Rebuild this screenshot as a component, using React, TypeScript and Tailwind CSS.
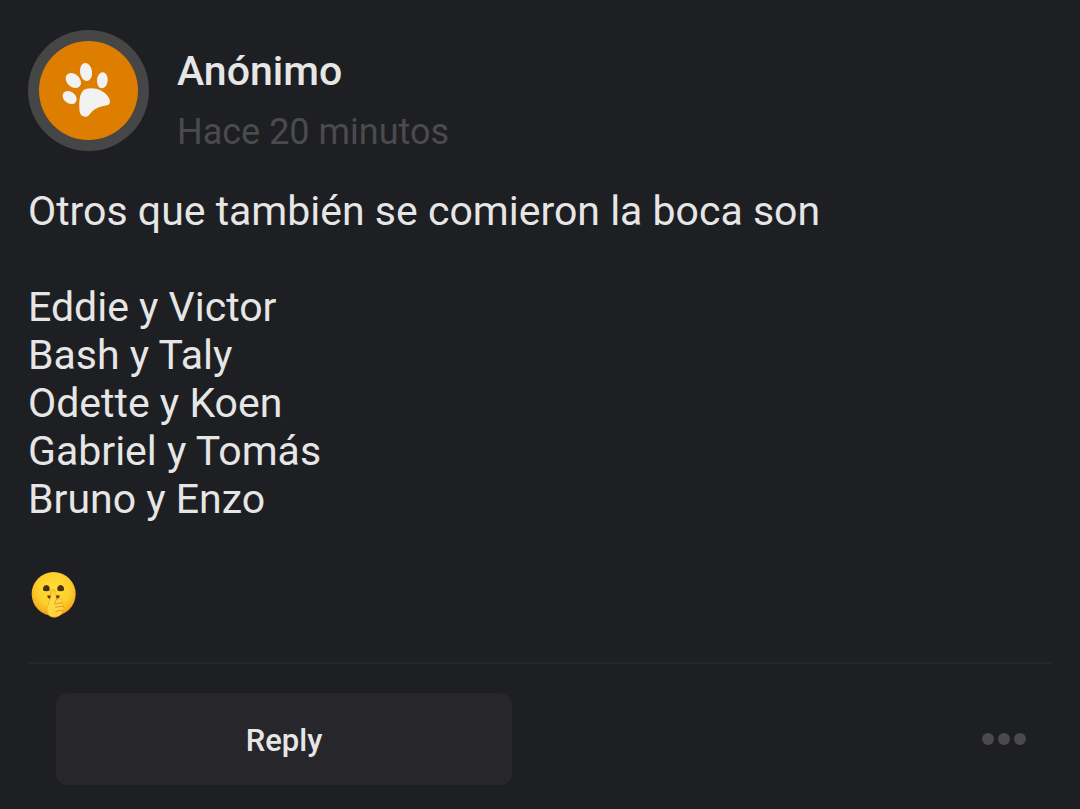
import React from "react";

const couples = [
    "Eddie y Victor",
    "Bash y Taly",
    "Odette y Koen",
    "Gabriel y Tomás",
    "Bruno y Enzo",
];

function PawAvatar() {
    return (
        <svg viewBox="0 0 363 363" className="size-[121px] shrink-0" role="img" aria-label="Avatar">
            <circle cx="181.5" cy="181.5" r="181.5" fill="#464646" />
            <circle cx="181.5" cy="181.5" r="148.5" fill="#de7e00" />
            <g fill="#f2f2f2" transform="translate(-24 -30)">
                <ellipse cx="160" cy="181.500" rx="19" ry="26" transform="rotate(-48 160 181.500)" />
                <ellipse cx="198" cy="156" rx="18" ry="27.500" transform="rotate(-8 198 156)" />
                <ellipse cx="247" cy="181" rx="16" ry="24" transform="rotate(5 247 181)" />
                <ellipse cx="149" cy="232.500" rx="17.500" ry="23" transform="rotate(-52 149 232.500)" />
                <path d="M178 262C177 242 180 221 190 211C198 204 214 203 229 206C247 211 261 222 267 234C271 243 271 251 266 254C261 257 249 257 239 261C222 267 215 276 208 284C203 290 196 292 190 289C181 286 178 277 178 262Z" />
            </g>
        </svg>
    );
}

function ShushingFace() {
    return (
        <svg viewBox="24 36 150 144" className="h-12 w-[50px]" role="img" aria-label="Cara pidiendo silencio">
            <defs>
                <radialGradient id="face" cx="0.5" cy="0.4" r="0.62">
                    <stop offset="0" stopColor="#ffe036" />
                    <stop offset="0.6" stopColor="#fdcf2d" />
                    <stop offset="0.85" stopColor="#f7b31f" />
                    <stop offset="1" stopColor="#ee9318" />
                </radialGradient>
                <linearGradient id="hand" x1="0" y1="0" x2="0.4" y2="1">
                    <stop offset="0" stopColor="#fbb52a" />
                    <stop offset="0.4" stopColor="#ffdc48" />
                    <stop offset="1" stopColor="#fdd23c" />
                </linearGradient>
            </defs>
            <circle cx="101" cy="105" r="66" fill="url(#face)" />
            <path d="M69 94V86Q72 78 79 78Q87 78 89 86V94Q86 97 79 97Q72 97 69 94Z" fill="#4a2f13" />
            <path d="M112 94V86Q114 78 122 78Q129 78 132 86V94Q129 97 122 97Q115 97 112 94Z" fill="#4a2f13" />
            <path d="M81 110Q100 106 120 110Q117 119 108 119H90Q83 118 81 110Z" fill="#603613" />
            <path
                d="M92 99Q93 91 99 91Q105 91 107 99L109 122Q116 117 124 121Q130 125 126 132Q134 136 130 143Q135 149 129 155Q126 169 109 174Q91 177 84 165Q77 149 85 136Q87 124 92 117Z"
                fill="url(#hand)"
                stroke="#f0a51e"
                strokeWidth="2"
            />
            <g fill="none" stroke="#e08a1a" strokeWidth="2.500" strokeLinecap="round">
                <path d="M109 122L104 134Q108 138 112 133L126 132" />
                <path d="M107 145Q118 140 130 143" />
                <path d="M108 157Q119 151 129 155" />
            </g>
        </svg>
    );
}

export default function App() {
    return (
        <main className="min-h-screen bg-[#1e1f22] font-[Roboto,sans-serif] text-[#e6e6e6]">
            <article className="px-7 pt-[30px] pb-6">
                {/* Author */}
                <header className="flex gap-7">
                    <PawAvatar />
                    <div className="pt-4">
                        <h1 className="text-[41px] leading-[50px] font-medium">Anónimo</h1>
                        <p className="mt-3 text-[36px] leading-12 text-[#4b4b4d]">
                            <time>Hace 20 minutos</time>
                        </p>
                    </div>
                </header>

                {/* Message */}
                <div className="mt-[31px] text-[41px] leading-12">
                    <p>Otros que también se comieron la boca son</p>
                    <ul className="mt-12">
                        {couples.map((couple) => (
                            <li key={couple}>{couple}</li>
                        ))}
                    </ul>
                    <div className="mt-12">
                        <ShushingFace />
                    </div>
                </div>

                {/* Actions */}
                <footer className="mt-[43px] flex items-center justify-between border-t-2 border-[#27262a] pt-[29px] pr-[26px] pl-7">
                    <button type="button" className="h-[92px] w-1/2 max-w-[456px] rounded-xl bg-[#27262b] pt-1 text-[31px] font-medium">
                        Reply
                    </button>
                    <button type="button" aria-label="Más opciones" className="flex gap-1">
                        <span className="size-3 rounded-full bg-[#4a4a4a]" />
                        <span className="size-3 rounded-full bg-[#4a4a4a]" />
                        <span className="size-3 rounded-full bg-[#4a4a4a]" />
                    </button>
                </footer>
            </article>
        </main>
    );
}
